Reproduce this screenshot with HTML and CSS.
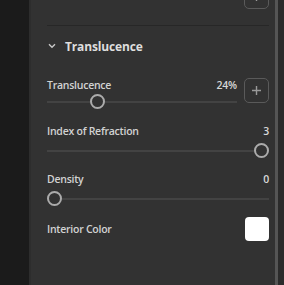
FILE: index.html
```html
<!DOCTYPE html>
<html>
<head>
<meta charset="utf-8">
<link rel="stylesheet" href="styles.css">
</head>
<body>
<div class="app">
  <div class="rail"></div>
  <div class="panel">
    <div class="top-row">
      <span class="label">Normal</span>
      <span class="btn"><svg width="11" height="11" viewBox="0 0 11 11"><path d="M5.5 1v9M1 5.5h9" stroke="#9a9a9a" stroke-width="1.4"/></svg></span>
    </div>
    <div class="divider"></div>
    <div class="section-head">
      <svg class="chev" width="8" height="6" viewBox="0 0 8 6"><path d="M1 1.2l3 3 3-3" fill="none" stroke="#c8c8c8" stroke-width="1.4"/></svg>
      <span class="title">Translucence</span>
    </div>
    <div class="field with-btn">
      <div class="field-main">
        <div class="line"><span class="label">Translucence</span><span class="value">24%</span></div>
        <div class="slider"><div class="track"></div><div class="thumb" style="left:43px"></div></div>
      </div>
      <span class="btn"><svg width="11" height="11" viewBox="0 0 11 11"><path d="M5.5 1v9M1 5.5h9" stroke="#9a9a9a" stroke-width="1.4"/></svg></span>
    </div>
    <div class="field f2">
      <div class="line"><span class="label">Index of Refraction</span><span class="value">3</span></div>
      <div class="slider"><div class="track"></div><div class="thumb" style="left:207px"></div></div>
    </div>
    <div class="field f3">
      <div class="line"><span class="label">Density</span><span class="value">0</span></div>
      <div class="slider"><div class="track"></div><div class="thumb" style="left:0px"></div></div>
    </div>
    <div class="color-row">
      <span class="label">Interior Color</span>
      <span class="swatch"></span>
    </div>
  </div>
  <div class="scroll"><div class="scroll-thumb"></div></div>
</div>
</body>
</html>
```
FILE: styles.css
```css
html, body { margin: 0; padding: 0; background: #1b1b1b; }
body { width: 284px; height: 285px; overflow: hidden; font-family: "Open Sans", "Noto Sans", sans-serif; }
.app { display: flex; height: 285px; }
.rail { width: 29px; background: #1b1b1b; flex: none; }
.panel { flex: 1; background: #323232; padding: 0 6px 0 16px; border-left: 2px solid #2d2d2d; box-sizing: border-box; overflow: hidden; }
.scroll { width: 9px; flex: none; background: #2b2b2b; display: flex; }
.scroll-thumb { width: 3px; background: #555555; }
.label { font-size: 10.5px; color: #d2d2d2; font-weight: 600; letter-spacing: -0.25px; }
.value { font-size: 10.5px; color: #d8d8d8; font-weight: 600; letter-spacing: -0.2px; }
.top-row { margin-top: -16px; height: 25px; display: flex; justify-content: space-between; align-items: center; }
.top-row .label { margin-top: -14px; }
.btn { width: 25px; height: 25px; box-sizing: border-box; border: 1px solid #5a5a5a; border-radius: 5px; display: flex; align-items: center; justify-content: center; flex: none; }
.divider { height: 1px; background: #272727; margin-top: 16px; }
.section-head { height: 40px; display: flex; align-items: center; gap: 9px; padding-left: 1px; }
.chev { flex: none; }
.title { font-size: 12px; font-weight: 700; color: #dedede; letter-spacing: -0.15px; }
.field { margin-top: 12px; }
.with-btn { display: flex; align-items: flex-start; gap: 7px; }
.field-main { flex: 1; }
.line { height: 14px; display: flex; justify-content: space-between; align-items: center; }
.slider { position: relative; height: 16px; margin-top: 2px; }
.track { position: absolute; left: 0; right: 0; top: 7px; height: 2px; background: #434343; }
.thumb { position: absolute; top: 0; width: 15px; height: 15px; box-sizing: border-box; border: 2px solid #ababab; border-radius: 50%; background: #323232; }
.f2 { margin-top: 14px; }
.f2 .slider { margin-top: 5px; }
.f3 { margin-top: 13px; }
.f3 .slider { margin-top: 5px; }
.color-row { margin-top: 10px; height: 24px; display: flex; justify-content: space-between; align-items: center; }
.swatch { width: 24px; height: 24px; background: #ffffff; border-radius: 4px; }
```
